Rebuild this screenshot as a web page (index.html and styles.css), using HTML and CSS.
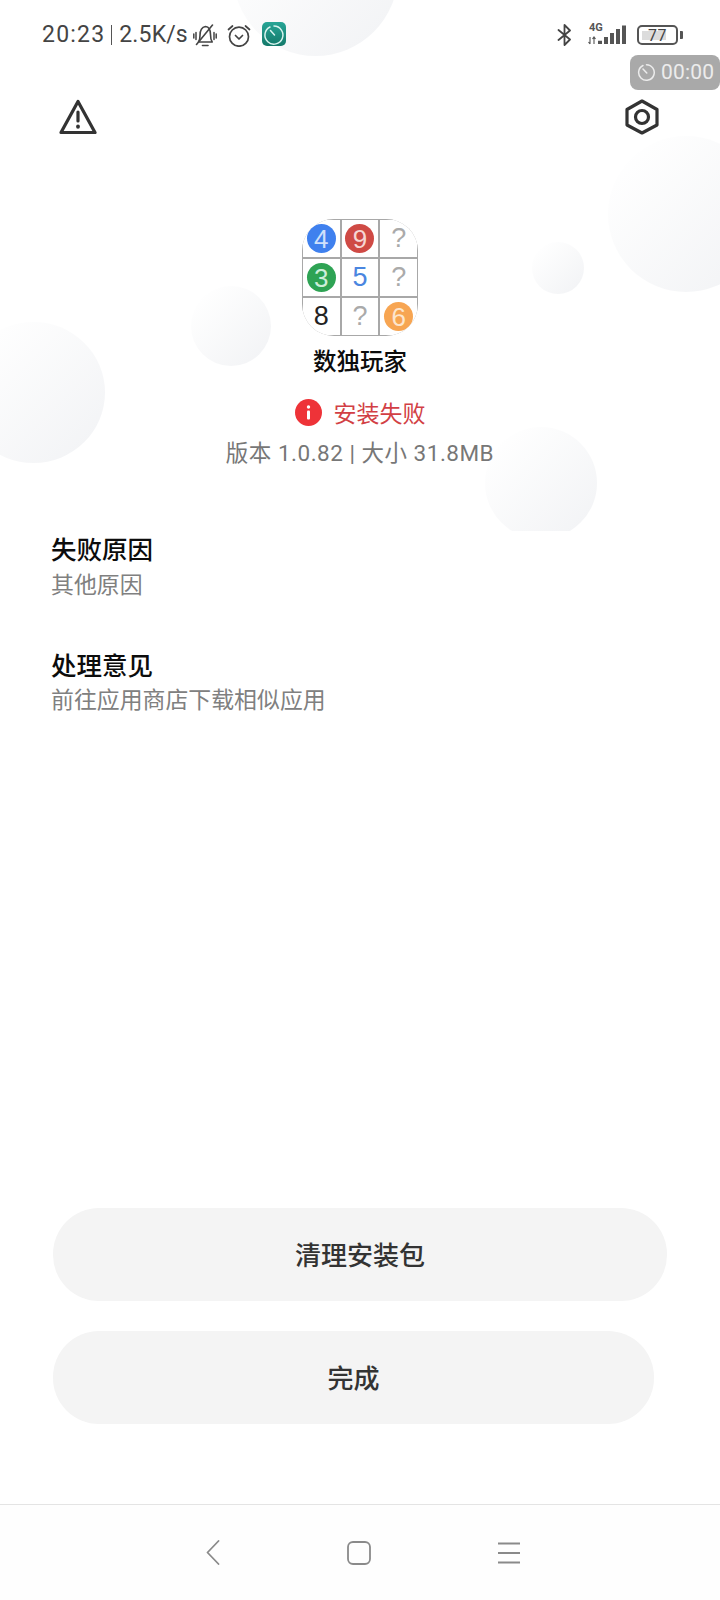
FILE: index.html
```html
<!DOCTYPE html>
<html lang="zh-CN">
<head>
<meta charset="utf-8">
<title>安装失败</title>
<link rel="stylesheet" href="styles.css">
</head>
<body>
<div class="page">
  <div class="bubbles" aria-hidden="true">
    <span class="bubble b-top"></span>
    <span class="bubble b-right"></span>
    <span class="bubble b-small"></span>
    <span class="bubble b-mid"></span>
    <span class="bubble b-left"></span>
    <span class="bubble b-bottom"></span>
  </div>

  <header class="statusbar">
    <div class="status-left">
      <span class="clock">20:23</span>
      <span class="sep"></span>
      <span class="speed">2.5K/s</span>
      <svg class="ic-bell" width="24" height="23" viewBox="0 0 24 23" fill="none" stroke="#444" stroke-width="1.600" stroke-linecap="round" stroke-linejoin="round">
        <path d="M5.500 18c1.300-1.800 1.500-3.500 1.500-6.500C7 6.500 9 3 12.500 2.500c3 .3 5 3.500 5 8 0 3.500.5 5.800 1.700 7.500z"/>
        <path d="M9.500 21.500h5.500"/>
        <path d="M3.500 20.500 19.500 1"/>
        <path d="M3 8.500v7M.8 10v4M21 8.500v7M23.200 10v4" stroke-width="1.500"/>
      </svg>
      <svg class="ic-alarm" width="24" height="23" viewBox="0 0 24 23" fill="none" stroke="#444" stroke-width="1.700" stroke-linecap="round" stroke-linejoin="round">
        <circle cx="12" cy="12.700" r="9.500"/>
        <path d="M8.500 11.500 12 15l3.500-3.500"/>
        <path d="M1.500 5.500 5.500 2M22.500 5.500 18.500 2"/>
      </svg>
      <svg class="ic-app" width="24" height="24" viewBox="0 0 24 24">
        <defs><linearGradient id="teal" x1="0" y1="0" x2="0" y2="1"><stop offset="0" stop-color="#27a596"/><stop offset="1" stop-color="#14796a"/></linearGradient></defs>
        <rect width="24" height="24" rx="5" fill="url(#teal)"/>
        <path d="M8 5a9 9 0 1 0 4-.9" fill="none" stroke="#d8f4ef" stroke-width="1.500" stroke-linecap="round"/>
        <path d="M8.500 8.500 12.500 13" stroke="#d8f4ef" stroke-width="1.500" stroke-linecap="round"/>
      </svg>
    </div>
    <div class="status-right">
      <svg class="ic-bt" width="15" height="22" viewBox="0 0 15 22" fill="none" stroke="#444" stroke-width="1.800" stroke-linejoin="round" stroke-linecap="round">
        <path d="M1.500 6 13 15.500 7.500 21V1L13 6.500 1.500 16"/>
      </svg>
      <svg class="ic-signal" width="39" height="22" viewBox="0 0 39 22">
        <text class="net" x="2" y="6.500">4G</text>
        <path d="M3 13v7M1.500 18 3 20M7 20v-7M5.500 15 7 13 8.500 15" fill="none" stroke="#555" stroke-width="1.100"/>
        <path d="M11 20v-3.300h4V20zM17 20v-7h4v7zM23 20V9h4v11zM29 20V5h4v15zM35 20V1.600h4V20z" fill="#555"/>
      </svg>
      <div class="battery">
        <div class="batt-body"><span class="batt-fill"></span><span class="batt-num">77</span></div>
        <span class="batt-nub"></span>
      </div>
    </div>
  </header>

  <div class="rec-pill">
    <svg width="19" height="19" viewBox="0 0 19 19" fill="none" stroke="#ececec" stroke-width="1.500" stroke-linecap="round">
      <path d="M6 2.500a7.800 7.800 0 1 0 3.500-.8"/>
      <path d="M6 6l3.800 4"/>
    </svg>
    <span>00:00</span>
  </div>

  <div class="toolbar">
    <svg width="38" height="36" viewBox="0 0 38 36" fill="none" stroke="#333" stroke-width="3.200" stroke-linejoin="round" stroke-linecap="round">
      <path d="M19 2.500 36 33.500H2z"/>
      <path d="M19 13v9"/>
      <path d="M19 27.500v.3" stroke-width="3.800"/>
    </svg>
    <svg width="34" height="36" viewBox="0 0 34 36" fill="none" stroke="#333" stroke-width="3.200" stroke-linejoin="round">
      <path d="M17 2 32 10.500V26L17 34 2 26V10.500z"/>
      <circle cx="17" cy="18" r="6.500"/>
    </svg>
  </div>

  <main class="main">
    <section class="app">
      <div class="app-icon">
        <div class="cell"><span class="disc blue">4</span></div>
        <div class="cell"><span class="disc red">9</span></div>
        <div class="cell q">?</div>
        <div class="cell"><span class="disc green">3</span></div>
        <div class="cell five">5</div>
        <div class="cell q">?</div>
        <div class="cell eight">8</div>
        <div class="cell q">?</div>
        <div class="cell"><span class="disc orange">6</span></div>
      </div>
      <h1 class="app-name">数独玩家</h1>
      <div class="result">
        <svg width="27" height="27" viewBox="0 0 27 27">
          <circle cx="13.500" cy="13.500" r="13.500" fill="#ee3338"/>
          <circle cx="13.500" cy="8" r="1.700" fill="#fff"/>
          <rect x="12" y="11.500" width="3" height="9" rx="1" fill="#fff"/>
        </svg>
        <span>安装失败</span>
      </div>
      <p class="meta">版本 1.0.82 | 大小 31.8MB</p>
    </section>

    <section class="info first">
      <h2>失败原因</h2>
      <p>其他原因</p>
    </section>
    <section class="info second">
      <h2>处理意见</h2>
      <p>前往应用商店下载相似应用</p>
    </section>

    <div class="actions">
      <button class="btn wide" type="button">清理安装包</button>
      <button class="btn narrow" type="button">完成</button>
    </div>
  </main>

  <nav class="navbar">
    <svg width="14" height="25" viewBox="0 0 14 25" fill="none" stroke="#8a8a8a" stroke-width="1.800" stroke-linecap="round" stroke-linejoin="round">
      <path d="M12.500 1 1.500 12.500 12.500 24"/>
    </svg>
    <svg width="24" height="24" viewBox="0 0 24 24" fill="none" stroke="#8a8a8a" stroke-width="1.800">
      <rect x="1" y="1" width="22" height="22" rx="5"/>
    </svg>
    <svg width="22" height="22" viewBox="0 0 22 22" fill="none" stroke="#8a8a8a" stroke-width="1.800">
      <path d="M0 1.500h22M0 11h22M0 20.500h22"/>
    </svg>
  </nav>
</div>
</body>
</html>
```

FILE: styles.css
```css
* { box-sizing: border-box; }

html, body {
  margin: 0;
  padding: 0;
  background: #fff;
}

.page {
  position: relative;
  width: 720px;
  height: 1600px;
  overflow: hidden;
  display: flex;
  flex-direction: column;
  background: #fff;
  font-family: "Noto Sans CJK SC", "Noto Sans", sans-serif;
}

/* Decorative background bubbles */
.bubbles {
  position: absolute;
  left: 0;
  top: 0;
  width: 720px;
  height: 531px;
  overflow: hidden;
}

.bubble {
  position: absolute;
  border-radius: 50%;
  background: linear-gradient(135deg, #ffffff 10%, #f3f4f6 88%);
}

.b-top { left: 233px; top: -109px; width: 165px; height: 165px; }
.b-right { left: 608px; top: 136px; width: 156px; height: 156px; }
.b-small { left: 532px; top: 242px; width: 52px; height: 52px; }
.b-mid { left: 191px; top: 286px; width: 80px; height: 80px; }
.b-left { left: -38px; top: 322px; width: 143px; height: 141px; }
.b-bottom { left: 485px; top: 427px; width: 112px; height: 112px; }

/* Status bar */
.statusbar {
  position: relative;
  height: 70px;
  padding: 0 37px 0 42px;
  display: flex;
  align-items: center;
  justify-content: space-between;
  color: #444;
}

.status-left,
.status-right {
  display: flex;
  align-items: center;
}

.clock,
.speed {
  font-family: Roboto, "Noto Sans", sans-serif;
  font-size: 23px;
  line-height: 30px;
  color: #444;
}

.clock { letter-spacing: 1.2px; }
.speed { letter-spacing: 0.15px; }

.sep {
  width: 1px;
  height: 20px;
  margin: 0 7px 0 6px;
  background: #555;
}

.ic-bell { margin-left: 5px; }
.ic-alarm { margin-left: 10px; }
.ic-app { margin-left: 11px; margin-top: -2px; }

.ic-signal {
  margin-left: 15px;
  overflow: visible;
}

.net {
  font-family: Roboto, sans-serif;
  font-size: 11px;
  font-weight: 700;
  fill: #555;
}

.battery {
  display: flex;
  align-items: center;
  margin-left: 11px;
  gap: 2px;
}

.batt-body {
  position: relative;
  width: 41px;
  height: 20px;
  border: 2px solid #555;
  border-radius: 5px;
}

.batt-fill {
  position: absolute;
  left: 3px;
  top: 4px;
  width: 24px;
  height: 9px;
  background: #dcdcdc;
}

.batt-num {
  position: absolute;
  left: 0;
  right: 0;
  top: 0;
  text-align: center;
  font-family: Roboto, sans-serif;
  font-size: 16px;
  line-height: 17px;
  letter-spacing: 0.6px;
  color: #444;
}

.batt-nub {
  width: 3px;
  height: 8px;
  background: #555;
  border-radius: 0 1px 1px 0;
}

/* Screen recorder pill */
.rec-pill {
  position: absolute;
  left: 630px;
  top: 55px;
  width: 90px;
  height: 35px;
  padding-left: 7px;
  display: flex;
  align-items: center;
  gap: 5px;
  border-radius: 8px;
  background: #a9a9a9;
  color: #ececec;
  font-family: Roboto, sans-serif;
  font-size: 21px;
  line-height: 35px;
  letter-spacing: 0.2px;
}

/* Toolbar */
.toolbar {
  position: relative;
  margin-top: 25px;
  height: 44px;
  padding: 0 61px 0 59px;
  display: flex;
  align-items: center;
  justify-content: space-between;
}

/* Main */
.main {
  position: relative;
  flex: 1;
  display: flex;
  flex-direction: column;
}

.app {
  display: flex;
  flex-direction: column;
  align-items: center;
  padding-top: 80px;
}

.app-icon {
  width: 116px;
  height: 117px;
  padding: 1px;
  display: grid;
  grid-template-columns: repeat(3, 1fr);
  grid-template-rows: repeat(3, 1fr);
  gap: 2px;
  background: #a8a8a8;
  border-radius: 32px;
  overflow: hidden;
}

.cell {
  display: flex;
  align-items: center;
  justify-content: center;
  background: #fff;
  font-family: "Liberation Sans", Arial, sans-serif;
  font-size: 27px;
  line-height: 1;
}

.cell.q { color: #aaa; }
.cell.five { color: #4a86e0; }
.cell.eight { color: #222; }

.disc {
  width: 29px;
  height: 29px;
  border-radius: 50%;
  display: flex;
  align-items: center;
  justify-content: center;
  font-size: 26px;
}

.blue { background: #3f80ee; color: #cfe0fb; }
.red { background: #cf4a45; color: #f6d6d4; }
.green { background: #2ea354; color: #cdeeda; }
.orange { background: #f7a552; color: #fde6cd; }

.app-name {
  margin: 7px 0 0;
  font-size: 23.500px;
  line-height: 34px;
  font-weight: 500;
  color: #0c0c0c;
}

.result {
  margin-top: 20px;
  height: 30px;
  display: flex;
  align-items: center;
  gap: 12px;
  color: #d23f45;
  font-size: 23px;
  line-height: 30px;
}

.meta {
  margin: 11px 0 0;
  font-size: 22.500px;
  line-height: 30px;
  color: #777;
  font-family: Roboto, "Noto Sans CJK SC", sans-serif;
  letter-spacing: 0.5px;
}

/* Info sections */
.info {
  padding-left: 51px;
}

.first { margin-top: 63px; }
.second { margin-top: 49px; }

.info h2 {
  margin: 0;
  font-size: 25.500px;
  line-height: 34px;
  font-weight: 500;
  color: #0c0c0c;
}

.info p {
  margin: 3px 0 0;
  font-size: 22.900px;
  line-height: 30px;
  color: #808080;
}

.second p { margin-top: 2px; }

/* Buttons */
.actions {
  margin-top: auto;
  padding: 0 0 80px 53px;
  display: flex;
  flex-direction: column;
  gap: 30px;
}

.btn {
  height: 93px;
  padding: 0 0 3px;
  border: 0;
  border-radius: 46px;
  background: #f4f4f4;
  color: #333;
  font-family: inherit;
  font-size: 26px;
  font-weight: 500;
}

.wide { width: 614px; }
.narrow { width: 601px; }

/* Navigation bar */
.navbar {
  position: relative;
  height: 96px;
  padding: 0 200px 0 206px;
  display: flex;
  align-items: center;
  justify-content: space-between;
  border-top: 1px solid #e4e4e4;
  background: #fefefe;
}
```
